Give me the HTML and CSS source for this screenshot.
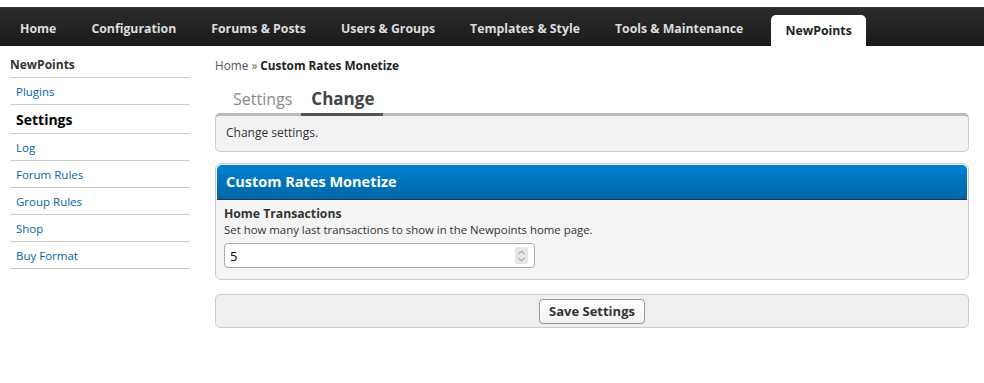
FILE: index.html
```html
<!DOCTYPE html>
<html>
<head>
<meta charset="utf-8">
<link rel="stylesheet" href="styles.css">
</head>
<body>
<div class="topbar">
  <ul class="menu">
    <li><a href="#">Home</a></li>
    <li><a href="#">Configuration</a></li>
    <li><a href="#">Forums &amp; Posts</a></li>
    <li><a href="#">Users &amp; Groups</a></li>
    <li><a href="#">Templates &amp; Style</a></li>
    <li><a href="#">Tools &amp; Maintenance</a></li>
    <li class="active"><a href="#">NewPoints</a></li>
  </ul>
</div>
<div class="page">
  <aside class="sidebar">
    <div class="side-title">NewPoints</div>
    <ul class="side-menu">
      <li><a href="#">Plugins</a></li>
      <li class="current"><a href="#">Settings</a></li>
      <li><a href="#">Log</a></li>
      <li><a href="#">Forum Rules</a></li>
      <li><a href="#">Group Rules</a></li>
      <li><a href="#">Shop</a></li>
      <li><a href="#">Buy Format</a></li>
    </ul>
  </aside>
  <main class="content">
    <div class="breadcrumb"><a href="#">Home</a> » <span class="bc-current">Custom Rates Monetize</span></div>
    <div class="subtabs">
      <a href="#" class="subtab">Settings</a>
      <a href="#" class="subtab on">Change</a>
    </div>
    <div class="subtab-desc">Change settings.</div>
    <div class="border-wrap">
      <div class="thead">Custom Rates Monetize</div>
      <div class="row">
        <label class="row-label">Home Transactions</label>
        <div class="row-desc">Set how many last transactions to show in the Newpoints home page.</div>
        <div class="numbox">
          <span class="numval">5</span>
          <span class="spin">
            <svg width="9" height="14" viewBox="0 0 9 14"><path d="M1.5 5 L4.5 2 L7.5 5" fill="none" stroke="#8a8a8a" stroke-width="1"/><path d="M1.5 9 L4.5 12 L7.5 9" fill="none" stroke="#8a8a8a" stroke-width="1"/></svg>
          </span>
        </div>
      </div>
    </div>
    <div class="form-buttons">
      <button class="submit">Save Settings</button>
    </div>
  </main>
</div>
</body>
</html>
```
FILE: styles.css
```css
* { box-sizing: border-box; }
body {
  margin: 0;
  font-family: "Open Sans", "Noto Sans", sans-serif;
  color: #333;
  background: #fff;
}
a { text-decoration: none; }
ul { list-style: none; margin: 0; padding: 0; }

.topbar {
  margin-top: 7px;
  height: 39px;
  background: linear-gradient(#2c2c2c, #1a1a1a);
  border-top: 1px solid #3a3a3a;
  padding-left: 8px;
}
.menu {
  display: flex;
  gap: 11px;
  height: 100%;
  align-items: flex-end;
}
.menu li a {
  display: block;
  height: 31px;
  line-height: 27px;
  padding: 0 12px;
  color: #ddd;
  font-weight: bold;
  font-size: 12.3px;
}
.menu li.active a {
  background: #fff;
  color: #222;
  border-radius: 5px 5px 0 0;
  margin-left: 5px;
  padding: 0 14px;
  line-height: 31px;
}

.page {
  display: flex;
  padding: 0 15px 0 10px;
}
.sidebar {
  width: 180px;
  flex: none;
}
.side-title {
  font-weight: bold;
  font-size: 12px;
  color: #333;
  height: 32px;
  line-height: 38px;
  border-bottom: 1px solid #ccc;
}
.side-menu li {
  border-bottom: 1px solid #ccc;
  height: 27px;
  line-height: 25px;
  padding-left: 6px;
}
.side-menu li a {
  color: #0066a2;
  font-size: 11.5px;
}
.side-menu li.current {
  height: 29px;
  line-height: 28px;
}
.side-menu li.current a {
  color: #000;
  font-weight: bold;
  font-size: 14px;
}

.content {
  flex: 1;
  margin-left: 25px;
}
.breadcrumb {
  font-size: 11.8px;
  color: #666;
  height: 25px;
  line-height: 38px;
}
.breadcrumb a { color: #555; }
.bc-current { font-weight: bold; color: #222; }

.subtabs {
  display: flex;
  margin-top: 14px;
  padding-left: 10px;
  height: 31px;
}
.subtab {
  font-size: 16px;
  color: #888;
  padding: 0 8px;
  line-height: 28px;
}
.subtab.on {
  color: #444;
  font-weight: bold;
  font-size: 17px;
  padding: 0 9px 0 10px;
  margin-left: 1px;
  border-bottom: 3px solid #555;
  position: relative;
  z-index: 1;
}
.subtab-desc {
  margin-top: -3px;
  background: #f2f2f2;
  border: 1px solid #ccc;
  border-top: 3px solid #bbb;
  border-radius: 5px;
  font-size: 12px;
  color: #333;
  padding: 8px 10px 10px;
  height: 39px;
}

.border-wrap {
  margin-top: 11px;
  border: 1px solid #ccc;
  border-radius: 6px;
  background: #f4f4f4;
  padding: 1px;
  overflow: hidden;
}
.thead {
  background: linear-gradient(#0082d2, #0066a6);
  color: #fff;
  font-weight: bold;
  font-size: 14.5px;
  height: 35px;
  line-height: 34px;
  padding-left: 9px;
  border-bottom: 1px solid #1d3a4a;
  border-radius: 5px 5px 0 0;
}
.row {
  padding: 6px 7px 10px;
}
.row-label {
  display: block;
  font-weight: bold;
  font-size: 12.2px;
  color: #333;
  line-height: 16px;
}
.row-desc {
  font-size: 11.4px;
  color: #333;
  line-height: 15px;
}
.numbox {
  margin-top: 6px;
  width: 311px;
  height: 25px;
  background: #fff;
  border: 1px solid #aaa;
  border-radius: 4px;
  display: flex;
  align-items: center;
  justify-content: space-between;
  padding: 0 6px 0 5px;
}
.numval {
  font-size: 13px;
  color: #000;
}
.spin {
  width: 13px;
  height: 17px;
  background: #e6e6ea;
  border-radius: 2px;
  display: flex;
  align-items: center;
  justify-content: center;
}

.form-buttons {
  margin-top: 14px;
  height: 34px;
  background: #efefef;
  border: 1px solid #ccc;
  border-radius: 5px;
  display: flex;
  align-items: center;
  justify-content: center;
}
.submit {
  font-family: "Open Sans", "Noto Sans", sans-serif;
  font-weight: bold;
  font-size: 13px;
  color: #333;
  height: 25px;
  padding: 0 9px;
  background: linear-gradient(#fff, #f0f0f0);
  border: 1px solid #999;
  border-radius: 4px;
}
```
